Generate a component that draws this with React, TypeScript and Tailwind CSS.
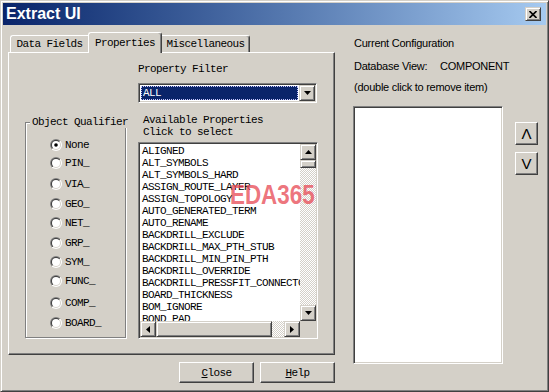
import React from "react";

// classic Win2000 look
const mono = "font-['Liberation_Mono',monospace] text-[11px] tracking-[-0.6px] text-black";
const sans = "font-['Liberation_Sans',Arial,sans-serif] text-[11px] tracking-[-0.25px] text-black";
const raised =
  "border border-t-white border-l-white border-r-[#404040] border-b-[#404040] shadow-[inset_-1px_-1px_0_#808080]";
const scrollBtn =
  "border border-t-[#d4d0c8] border-l-[#d4d0c8] border-r-[#404040] border-b-[#404040] shadow-[inset_1px_1px_0_#ffffff,inset_-1px_-1px_0_#808080]";
const sunken =
  "border border-t-[#808080] border-l-[#808080] border-r-white border-b-white shadow-[inset_1px_1px_0_#404040,inset_-1px_-1px_0_#d4d0c8] p-[1px]";
const checker = "bg-[repeating-conic-gradient(#d4d0c8_0_25%,#ffffff_0_50%)] bg-[length:2px_2px]";

const QUALIFIERS = [
  { label: "None", mt: "mt-[16px]", checked: true },
  { label: "PIN_", mt: "mt-[6px]" },
  { label: "VIA_", mt: "mt-[9px]" },
  { label: "GEO_", mt: "mt-[8px]" },
  { label: "NET_", mt: "mt-[7px]" },
  { label: "GRP_", mt: "mt-[8px]" },
  { label: "SYM_", mt: "mt-[7px]" },
  { label: "FUNC_", mt: "mt-[7px]" },
  { label: "COMP_", mt: "mt-[10px]" },
  { label: "BOARD_", mt: "mt-[8px]" },
];

const PROPERTIES = [
  "ALIGNED",
  "ALT_SYMBOLS",
  "ALT_SYMBOLS_HARD",
  "ASSIGN_ROUTE_LAYER",
  "ASSIGN_TOPOLOGY",
  "AUTO_GENERATED_TERM",
  "AUTO_RENAME",
  "BACKDRILL_EXCLUDE",
  "BACKDRILL_MAX_PTH_STUB",
  "BACKDRILL_MIN_PIN_PTH",
  "BACKDRILL_OVERRIDE",
  "BACKDRILL_PRESSFIT_CONNECTOR",
  "BOARD_THICKNESS",
  "BOM_IGNORE",
  "BOND_PAD",
];

function Arrow({ dir }: { dir: "up" | "down" | "left" | "right" }) {
  if (dir === "up" || dir === "down") {
    return (
      <svg width="7" height="4" viewBox="0 0 7 4">
        <polygon points={dir === "up" ? "3.5,0 7,4 0,4" : "0,0 7,0 3.5,4"} fill="#000" />
      </svg>
    );
  }
  return (
    <svg width="4" height="7" viewBox="0 0 4 7">
      <polygon points={dir === "left" ? "4,0 4,7 0,3.5" : "0,0 0,7 4,3.5"} fill="#000" />
    </svg>
  );
}

function Radio({ checked }: { checked?: boolean }) {
  return (
    <svg width="12" height="12" viewBox="0 0 12 12" className="shrink-0">
      <defs>
        <linearGradient id="radio-outer" x1="0" y1="0" x2="1" y2="1">
          <stop offset="0.5" stopColor="#808080" />
          <stop offset="0.5" stopColor="#ffffff" />
        </linearGradient>
        <linearGradient id="radio-inner" x1="0" y1="0" x2="1" y2="1">
          <stop offset="0.5" stopColor="#404040" />
          <stop offset="0.5" stopColor="#d4d0c8" />
        </linearGradient>
      </defs>
      <circle cx="6" cy="6" r="6" fill="url(#radio-outer)" />
      <circle cx="6" cy="6" r="5" fill="url(#radio-inner)" />
      <circle cx="6" cy="6" r="4" fill="#ffffff" />
      {checked && <circle cx="6" cy="6" r="1.8" fill="#000000" />}
    </svg>
  );
}

function TitleBar() {
  return (
    <div className="h-[22px] shrink-0 flex items-center justify-between pl-[3px] pr-[5px] bg-linear-to-r from-[#0a246a] to-[#a6caf0]">
      <span className="font-['Liberation_Sans',Arial,sans-serif] font-bold text-[16px] leading-none text-white">
        Extract UI
      </span>
      <div className={`w-[16px] h-[14px] bg-[#d4d0c8] ${scrollBtn} flex items-center justify-center`}>
        <svg width="8" height="7" viewBox="0 0 8 7">
          <path d="M0.5 0L7.5 7M7.5 0L0.5 7" stroke="#000" strokeWidth="1.6" />
        </svg>
      </div>
    </div>
  );
}

function Tabs() {
  return (
    <div className="flex items-end h-[20px] pl-[2px]">
      <div className={`${mono} h-[17px] w-[78px] border-t border-l border-white rounded-tl-[3px] flex justify-center pt-[2px] leading-[12px] whitespace-nowrap`}>
        Data Fields
      </div>
      <div
        className={`${mono} relative z-10 h-[21px] w-[74px] -mb-[1px] bg-[#d4d0c8] border-t border-l border-r border-t-white border-l-white border-r-[#404040] shadow-[inset_-1px_0_0_#808080] rounded-t-[3px] flex justify-center pt-[4px] leading-[12px] whitespace-nowrap`}
      >
        Properties
      </div>
      <div
        className={`${mono} h-[17px] w-[88px] border-t border-r border-t-white border-r-[#404040] shadow-[inset_-1px_0_0_#808080] rounded-tr-[3px] flex justify-center pt-[2px] leading-[12px] whitespace-nowrap`}
      >
        Miscellaneous
      </div>
    </div>
  );
}

function PropertyList() {
  return (
    <div className={`w-[180px] h-[197px] bg-white ${sunken} grid grid-cols-[1fr_16px] grid-rows-[1fr_16px]`}>
      <div className="overflow-hidden pl-[2px] pt-[1px]">
        {PROPERTIES.map((p) => (
          <div key={p} className={`${mono} leading-[12px] whitespace-nowrap`}>
            {p}
          </div>
        ))}
      </div>
      <div className="flex flex-col">
        <div className={`h-[16px] shrink-0 bg-[#d4d0c8] ${scrollBtn} flex items-center justify-center`}>
          <Arrow dir="up" />
        </div>
        <div className={`h-[8px] shrink-0 bg-[#d4d0c8] ${scrollBtn}`} />
        <div className={`flex-1 ${checker}`} />
        <div className={`h-[16px] shrink-0 bg-[#d4d0c8] ${scrollBtn} flex items-center justify-center`}>
          <Arrow dir="down" />
        </div>
      </div>
      <div className="flex">
        <div className={`w-[16px] shrink-0 bg-[#d4d0c8] ${scrollBtn} flex items-center justify-center`}>
          <Arrow dir="left" />
        </div>
        <div className={`w-[116px] shrink-0 bg-[#d4d0c8] ${scrollBtn}`} />
        <div className={`flex-1 ${checker}`} />
        <div className={`w-[16px] shrink-0 bg-[#d4d0c8] ${scrollBtn} flex items-center justify-center`}>
          <Arrow dir="right" />
        </div>
      </div>
      <div className="bg-[#d4d0c8]" />
    </div>
  );
}

function PropertiesPanel() {
  return (
    <div className={`relative h-[303px] w-[327px] ${raised} flex`}>
      {/* Object Qualifier group */}
      <div className="pl-[16px] pt-[69px]">
        <div className="relative w-[101px] h-[216px] border border-[#808080] shadow-[inset_1px_1px_0_#ffffff,1px_1px_0_#ffffff] pl-[24px]">
          <span className={`${mono} absolute -top-[7px] left-[4px] px-[2px] bg-[#d4d0c8] leading-[12px] whitespace-nowrap`}>
            Object Qualifier
          </span>
          {QUALIFIERS.map((q) => (
            <div key={q.label} className={`${q.mt} h-[12px] flex items-center gap-[3px]`}>
              <Radio checked={q.checked} />
              <span className={`${mono} leading-[12px]`}>{q.label}</span>
            </div>
          ))}
        </div>
      </div>

      {/* Filter + list */}
      <div className="ml-[12px] pt-[10px] flex flex-col">
        <div className={`${mono} leading-[12px]`}>Property Filter</div>
        <div className={`mt-[8px] w-[179px] h-[20px] bg-white ${sunken} flex`}>
          <div className="flex-1 p-[1px]">
            <div className={`h-full bg-[#0a246a] border border-dotted border-[#c8c8ff] pl-[1px] ${mono} text-white leading-[12px]`}>
              ALL
            </div>
          </div>
          <div className={`w-[16px] bg-[#d4d0c8] ${scrollBtn} flex items-center justify-center`}>
            <Arrow dir="down" />
          </div>
        </div>
        <div className={`mt-[11px] pl-[5px] ${mono} leading-[12px]`}>
          <div>Available Properties</div>
          <div>Click to select</div>
        </div>
        <div className="mt-[4px]">
          <PropertyList />
        </div>
      </div>

      {/* watermark lying over the list */}
      <span className="absolute left-[221px] top-[128px] origin-left scale-x-[0.8] font-['Liberation_Sans',Arial,sans-serif] font-bold text-[28px] leading-none text-[#e8505a]/80 pointer-events-none">
        EDA365
      </span>
    </div>
  );
}

function PushButton({ hot, rest }: { hot: string; rest: string }) {
  return (
    <div className={`w-[75px] h-[21px] ${raised} flex items-center justify-center ${mono} leading-[12px]`}>
      <span className="underline underline-offset-[1px]">{hot}</span>
      {rest}
    </div>
  );
}

function ConfigSide() {
  return (
    <div className="ml-[18px] flex flex-col">
      <div className={`mt-[12px] pl-[1px] ${sans} leading-[13px]`}>Current Configuration</div>
      <div className={`mt-[10px] pl-[1px] ${sans} leading-[13px] flex`}>
        <span className="w-[86px]">Database View:</span>
        <span>COMPONENT</span>
      </div>
      <div className={`mt-[8px] pl-[1px] ${sans} leading-[13px]`}>(double click to remove item)</div>
      <div className="mt-[12px] flex items-start">
        <div className={`w-[150px] h-[258px] bg-white ${sunken}`} />
        <div className="ml-[12px] mt-[16px] flex flex-col gap-[7px]">
          <div className={`w-[23px] h-[23px] ${raised} flex items-center justify-center font-['Liberation_Sans',Arial,sans-serif] text-[15px] font-light leading-none`}>
            Λ
          </div>
          <div className={`w-[23px] h-[23px] ${raised} flex items-center justify-center font-['Liberation_Sans',Arial,sans-serif] text-[15px] font-light leading-none`}>
            V
          </div>
        </div>
      </div>
    </div>
  );
}

export default function App() {
  return (
    <div className="w-[549px] h-[392px] overflow-hidden bg-[#d4d0c8] border border-t-[#d4d0c8] border-l-[#d4d0c8] border-r-[#404040] border-b-[#404040] shadow-[inset_1px_1px_0_#ffffff,inset_-1px_-1px_0_#808080] p-[2px] flex flex-col">
      <TitleBar />
      <div className="flex flex-1">
        <div className="pl-[5px] w-[332px] shrink-0 flex flex-col">
          <div className="mt-[7px]">
            <Tabs />
          </div>
          <PropertiesPanel />
          <div className="mt-[7px] flex justify-end gap-[6px]">
            <PushButton hot="C" rest="lose" />
            <PushButton hot="H" rest="elp" />
          </div>
        </div>
        <ConfigSide />
      </div>
    </div>
  );
}
